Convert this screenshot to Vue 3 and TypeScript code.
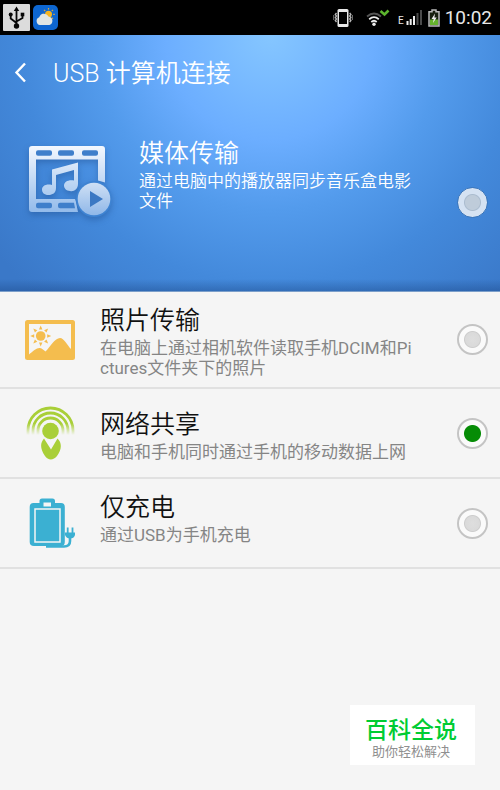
<script setup lang="ts">
import { ref } from 'vue'

type Mode = 'media' | 'photo' | 'network' | 'charge'

interface Option {
  id: Mode
  title: string
  detail: string
}

const selected = ref<Mode>('network')

const options: Option[] = [
  { id: 'photo', title: '照片传输', detail: '在电脑上通过相机软件读取手机DCIM和Pictures文件夹下的照片' },
  { id: 'network', title: '网络共享', detail: '电脑和手机同时通过手机的移动数据上网' },
  { id: 'charge', title: '仅充电', detail: '通过USB为手机充电' },
]

const rays: number[] = [0, 45, 90, 135, 180, 225, 270, 315]
</script>

<template>
  <div class="screen">
    <div class="status">
      <div class="status-left">
        <svg width="27" height="27" viewBox="0 0 27 27" aria-hidden="true">
          <rect width="27" height="27" rx="1" fill="#dcdcdc" />
          <g fill="none" stroke="#080808" stroke-width="1.8">
            <path d="M13.500 5V22M7.700 11V14.500L13.500 19M19.500 11V14L13.500 17.500" />
          </g>
          <g fill="#080808">
            <path d="M13.500 2.500L16.200 7H10.800Z" />
            <circle cx="7.700" cy="10.500" r="2" />
            <rect x="17.700" y="8.700" width="3.600" height="3.600" />
            <circle cx="13.500" cy="22" r="2.700" />
          </g>
        </svg>
        <svg width="25" height="25" viewBox="0 0 25 25" aria-hidden="true">
          <rect width="25" height="25" rx="5" fill="#0d66d0" />
          <g stroke="#d9a83c" stroke-width="1.200">
            <path v-for="a in rays" :key="a" d="M15.500 4.600V3" :transform="`rotate(${a} 15.500 9.300)`" />
          </g>
          <circle cx="15.500" cy="9.300" r="3.500" fill="#f5b51f" />
          <path d="M7 20A4 4 0 0 1 6.200 12.300A5 5 0 0 1 15.500 11.500A4.400 4.400 0 0 1 16.500 20Z" fill="#dfe6e4" />
        </svg>
      </div>
      <div class="status-right">
        <svg width="20" height="20" viewBox="0 0 20 20" aria-hidden="true">
          <rect x="4.500" y="1" width="11" height="18" rx="1.500" fill="#e8e8e8" />
          <rect x="6" y="4" width="8" height="12" fill="#000" />
          <path d="M3.500 5L2.300 6.500L3.500 8L2.300 9.500L3.500 11L2.300 12.500L3.500 14M16.700 5L17.900 6.500L16.700 8L17.900 9.500L16.700 11L17.900 12.500L16.700 14" fill="none" stroke="#bbb" stroke-width="1.300" />
          <path d="M.7 7V12M19.400 7V12" stroke="#777" stroke-width="1" />
        </svg>
        <svg class="wifi" width="24" height="18" viewBox="0 0 24 18" aria-hidden="true">
          <g fill="none" stroke-width="1.800">
            <path d="M1 7.500Q8 1.500 15 7.500" stroke="#555" />
            <path d="M3.200 10.200Q8 6 12.800 10.200" stroke="#eee" />
            <path d="M5.300 13Q8 10.500 10.700 13" stroke="#eee" />
          </g>
          <circle cx="8" cy="15.300" r="1.700" fill="#eee" />
          <path d="M14.500 2L18.500 5.500L22.500 1.500" fill="none" stroke="#5cb52e" stroke-width="2.600" />
        </svg>
        <span class="carrier">E</span>
        <svg width="17" height="17" viewBox="0 0 17 17" aria-hidden="true">
          <path d="M1.500 12V16M4.700 10V16M8 7V16" stroke="#eee" stroke-width="2" />
          <path d="M11.500 4V16M15 1V16" stroke="#4b4b4b" stroke-width="2" />
        </svg>
        <svg class="battery" width="12" height="18" viewBox="0 0 12 18" aria-hidden="true">
          <path d="M4 1H8V2.700H11V17H1V2.700H4Z" fill="#182010" stroke="#bbb" stroke-width="1.500" />
          <path d="M2 10.500H10V16H2Z" fill="#65b22c" />
          <path d="M7 4.500L3.500 10H5.700L5 14L8.700 8.500H6.400Z" fill="#eee" />
        </svg>
        <span class="clock">10:02</span>
      </div>
    </div>

    <header class="hero">
      <div class="bar">
        <button class="back" type="button" aria-label="返回">
          <svg width="14" height="22" viewBox="0 0 14 22" aria-hidden="true">
            <path d="M12 1.500L3.500 10.500L12 19.500" fill="none" stroke="#fff" stroke-width="2.400" />
          </svg>
        </button>
        <h1>USB 计算机连接</h1>
      </div>
      <label class="media">
        <svg class="media-icon" width="86" height="76" viewBox="0 0 86 76" aria-hidden="true">
          <defs>
            <linearGradient id="film" gradientUnits="userSpaceOnUse" x1="0" y1="2" x2="0" y2="70">
              <stop offset="0" stop-color="#f4f8fe" />
              <stop offset="1" stop-color="#90b9ea" />
            </linearGradient>
            <linearGradient id="disc" x1="0" y1="0" x2="0" y2="1">
              <stop offset="0" stop-color="#cfe0f5" />
              <stop offset="1" stop-color="#8fb7e8" />
            </linearGradient>
          </defs>
          <path
            fill="#3f7fcb"
            d="M8 6H24V12H8ZM30 6H46V12H30ZM54 6H70V12H54ZM8 58.500H24V64.500H8ZM30 58.500H47V64.500H30Z"
          />
          <path
            fill="url(#film)"
            fill-rule="evenodd"
            d="M4 2H74Q77 2 77 5V38.500L70 36.500V15.500H8V55H47L48 58L50 68H4Q1 68 1 65V5Q1 2 4 2ZM10 6.200Q8 6.200 8 8.200V9.800Q8 11.800 10 11.800H22Q24 11.800 24 9.800V8.200Q24 6.200 22 6.200ZM32 6.200Q30 6.200 30 8.200V9.800Q30 11.800 32 11.800H44Q46 11.800 46 9.800V8.200Q46 6.200 44 6.200ZM56 6.200Q54 6.200 54 8.200V9.800Q54 11.800 56 11.800H68Q70 11.800 70 9.800V8.200Q70 6.200 68 6.200ZM10 58.700Q8 58.700 8 60.700V62.300Q8 64.300 10 64.300H22Q24 64.300 24 62.300V60.700Q24 58.700 22 58.700ZM32 58.700Q30 58.700 30 60.700V62.300Q30 64.300 32 64.300H47L46 58.700Z"
          />
          <path
            fill="url(#film)"
            d="M24 25.500L50 18.500V40C50 45 46 48 42 47C38 47 36 44 36 41.500C36 38 40 35.500 46 36.500V26L28 31V44C28 49 24.500 51 20.500 51C16 51 14 48.500 14 45.500C14 42 18 39.500 24 41Z"
          />
          <circle cx="66" cy="55" r="18" fill="#3e83d2" />
          <circle cx="66" cy="55" r="16.300" fill="url(#disc)" />
          <path d="M62 47V63L75 55Z" fill="#3b78c3" />
        </svg>
        <span class="text">
          <span class="title">媒体传输</span>
          <span class="detail">通过电脑中的播放器同步音乐盒电影文件</span>
        </span>
        <input v-model="selected" class="radio radio-blue" type="radio" name="mode" value="media" />
      </label>
    </header>

    <main class="list">
      <label v-for="o in options" :key="o.id" class="row" :class="`row-${o.id}`">
        <span class="icon">
          <svg v-if="o.id === 'photo'" width="50" height="40" viewBox="0 0 50 40" aria-hidden="true">
            <rect width="50" height="40" rx="2.500" fill="#f4bd4e" />
            <rect x="4" y="4" width="42" height="32" fill="#f5f5f5" />
            <path d="M4 34.500C8 31 12 27.500 15 28C17 28 19 30.500 20.500 31.500C25 27 30 18 35 18C39 18 42 25 46 29V37H4Z" fill="#f4bd4e" />
            <circle cx="15.700" cy="16" r="4.800" fill="#f4bd4e" />
            <path v-for="a in rays" :key="a" d="M14 9.500L15.700 5.500L17.400 9.500Z" fill="#f4bd4e" :transform="`rotate(${a} 15.700 16)`" />
          </svg>
          <svg v-else-if="o.id === 'network'" width="50" height="54" viewBox="0 0 50 54" aria-hidden="true">
            <defs>
              <linearGradient id="wave" gradientUnits="userSpaceOnUse" x1="0" y1="0" x2="0" y2="29">
                <stop offset=".6" stop-color="#a9cf38" />
                <stop offset="1" stop-color="#a9cf38" stop-opacity="0" />
              </linearGradient>
            </defs>
            <g fill="none" stroke="url(#wave)" stroke-width="2.800">
              <path d="M3 30V24.500A22.500 22.500 0 0 1 48 24.500V30" />
              <path d="M8 30V24.500A17.500 17.500 0 0 1 43 24.500V30" />
              <path d="M13 30V24.500A12.500 12.500 0 0 1 38 24.500V30" />
            </g>
            <circle cx="25.500" cy="25" r="9.300" fill="#f5f5f5" />
            <circle cx="25.500" cy="25" r="8.300" fill="#a9cf38" />
            <path d="M19 32.500L26 43.500L32.500 32.500C37.500 37 36.500 44 32 50C28.500 54.500 23 54.500 20 50C15 43 15 37 19 32.500Z" fill="#a9cf38" />
          </svg>
          <svg v-else width="50" height="52" viewBox="0 0 50 52" aria-hidden="true">
            <path d="M14.500 6V4Q14.500 1.500 17 1.500H27.500Q30 1.500 30 4V6H36Q39.800 6 39.800 10V45Q39.800 49 36 49H9Q4.700 49 4.700 45V10Q4.700 6 8.500 6Z" fill="#3bb0d2" />
            <path d="M18.500 9.500V5.500H26V9.500Z" fill="#f5f5f5" />
            <rect x="10" y="12" width="25" height="33" fill="#3bb0d2" stroke="#f5f5f5" stroke-width="1.500" />
            <path d="M21 49.500H39Q45 49.500 45 44V38" fill="none" stroke="#3bb0d2" stroke-width="2.600" />
            <path d="M40 35.500H50V38Q49 41.500 45 41.500Q41.500 41.500 40 38Z" fill="#3bb0d2" />
            <path d="M42.700 30.500V36M47.500 30.500V36" stroke="#3bb0d2" stroke-width="1.800" />
          </svg>
        </span>
        <span class="text">
          <span class="title">{{ o.title }}</span>
          <span class="detail">{{ o.detail }}</span>
        </span>
        <input v-model="selected" class="radio" type="radio" name="mode" :value="o.id" />
      </label>
    </main>

    <aside class="brand">
      <strong>百科全说</strong>
      <span>助你轻松解决</span>
    </aside>
  </div>
</template>

<style>
body {
  margin: 0;
  background: #f5f5f5;
}
</style>

<style scoped>
.screen {
  min-height: 100vh;
  font-family: Roboto, "Noto Sans CJK SC", sans-serif;
  background: #f5f5f5;
}

svg {
  display: block;
  flex: none;
}

.status {
  display: flex;
  justify-content: space-between;
  height: 35px;
  background: #000;
  color: #e8e8e8;
}

.status-left {
  display: flex;
  align-items: center;
  gap: 3px;
  padding-left: 3px;
}

.status-right {
  display: flex;
  align-items: center;
  padding-right: 8px;
}

.wifi {
  margin-left: 13px;
}

.carrier {
  align-self: flex-end;
  margin: 0 2px 8px 8px;
  font-size: 10px;
  line-height: 12px;
}

.battery {
  margin: 0 5px;
}

.clock {
  font-size: 19px;
  line-height: 24px;
}

.hero {
  box-sizing: border-box;
  height: 257px;
  border-bottom: 1px solid #7c9fca;
  color: #fff;
  background:
    linear-gradient(to top, rgba(20, 60, 120, 0.35), rgba(20, 60, 120, 0) 12px),
    radial-gradient(circle at 54% 0, #85c6ff 0, #6caeff 105px, #539bec 175px, #4389db 250px, #3a78c8 350px);
}

.bar {
  display: flex;
  align-items: center;
  height: 76px;
}

.back {
  display: flex;
  align-items: center;
  justify-content: flex-end;
  width: 27px;
  height: 48px;
  margin: 0 26px 0 0;
  padding: 0;
  border: 0;
  background: none;
  cursor: pointer;
}

h1 {
  margin: 0;
  padding-top: 2px;
  font-size: 25px;
  font-weight: 350;
  line-height: 32px;
}

.media {
  display: grid;
  grid-template-columns: 139px 1fr 84px;
  align-items: start;
  padding-top: 27px;
}

.media-icon {
  margin: 6px 0 0 28px;
  filter: drop-shadow(0 3px 3px rgba(20, 60, 120, 0.35));
}

.text {
  display: flex;
  flex-direction: column;
  gap: 1px;
}

.title {
  font-size: 25px;
  font-weight: 350;
  line-height: 32px;
}

.detail {
  font-size: 17px;
  font-weight: 350;
  line-height: 20px;
  word-break: break-all;
}

.row {
  box-sizing: border-box;
  display: grid;
  grid-template-columns: 100px 1fr 84px;
  align-items: center;
  min-height: 90px;
  border-bottom: 2px solid #e1e1e1;
}

.row .text {
  padding: 13px 0 9px;
}

.row .title {
  color: #111;
}

.row .detail {
  color: #858585;
  font-weight: 400;
}

.row-charge .text {
  align-self: start;
}

.icon {
  padding-left: 25px;
}

.radio {
  appearance: none;
  box-sizing: border-box;
  justify-self: end;
  width: 31px;
  height: 31px;
  margin: 0 12px 0 0;
  border: 2px solid #c4c4c4;
  border-radius: 50%;
  background: radial-gradient(circle, #dedede 0, #dadada 7px, #cdcdcd 8px, #fafafa 9px);
}

.radio:checked {
  background: radial-gradient(circle, #068c06 0, #068c06 8px, #fafafa 9px);
}

.radio-blue {
  align-self: start;
  margin-top: 49px;
  border-width: 1px;
  border-color: #3c76ba;
  background: radial-gradient(circle, #bfccda 0, #bfccda 7px, #abbccf 8px, #d5e2f2 9px);
}

.brand {
  position: fixed;
  right: 25px;
  bottom: 25px;
  display: flex;
  flex-direction: column;
  align-items: center;
  box-sizing: border-box;
  width: 125px;
  height: 60px;
  padding: 12px 3px 0 0;
  background: #fff;
}

.brand strong {
  color: #00cc33;
  font-size: 23px;
  font-weight: 500;
  line-height: 28px;
}

.brand span {
  color: #8f8f8f;
  font-size: 13px;
  line-height: 14px;
}
</style>
